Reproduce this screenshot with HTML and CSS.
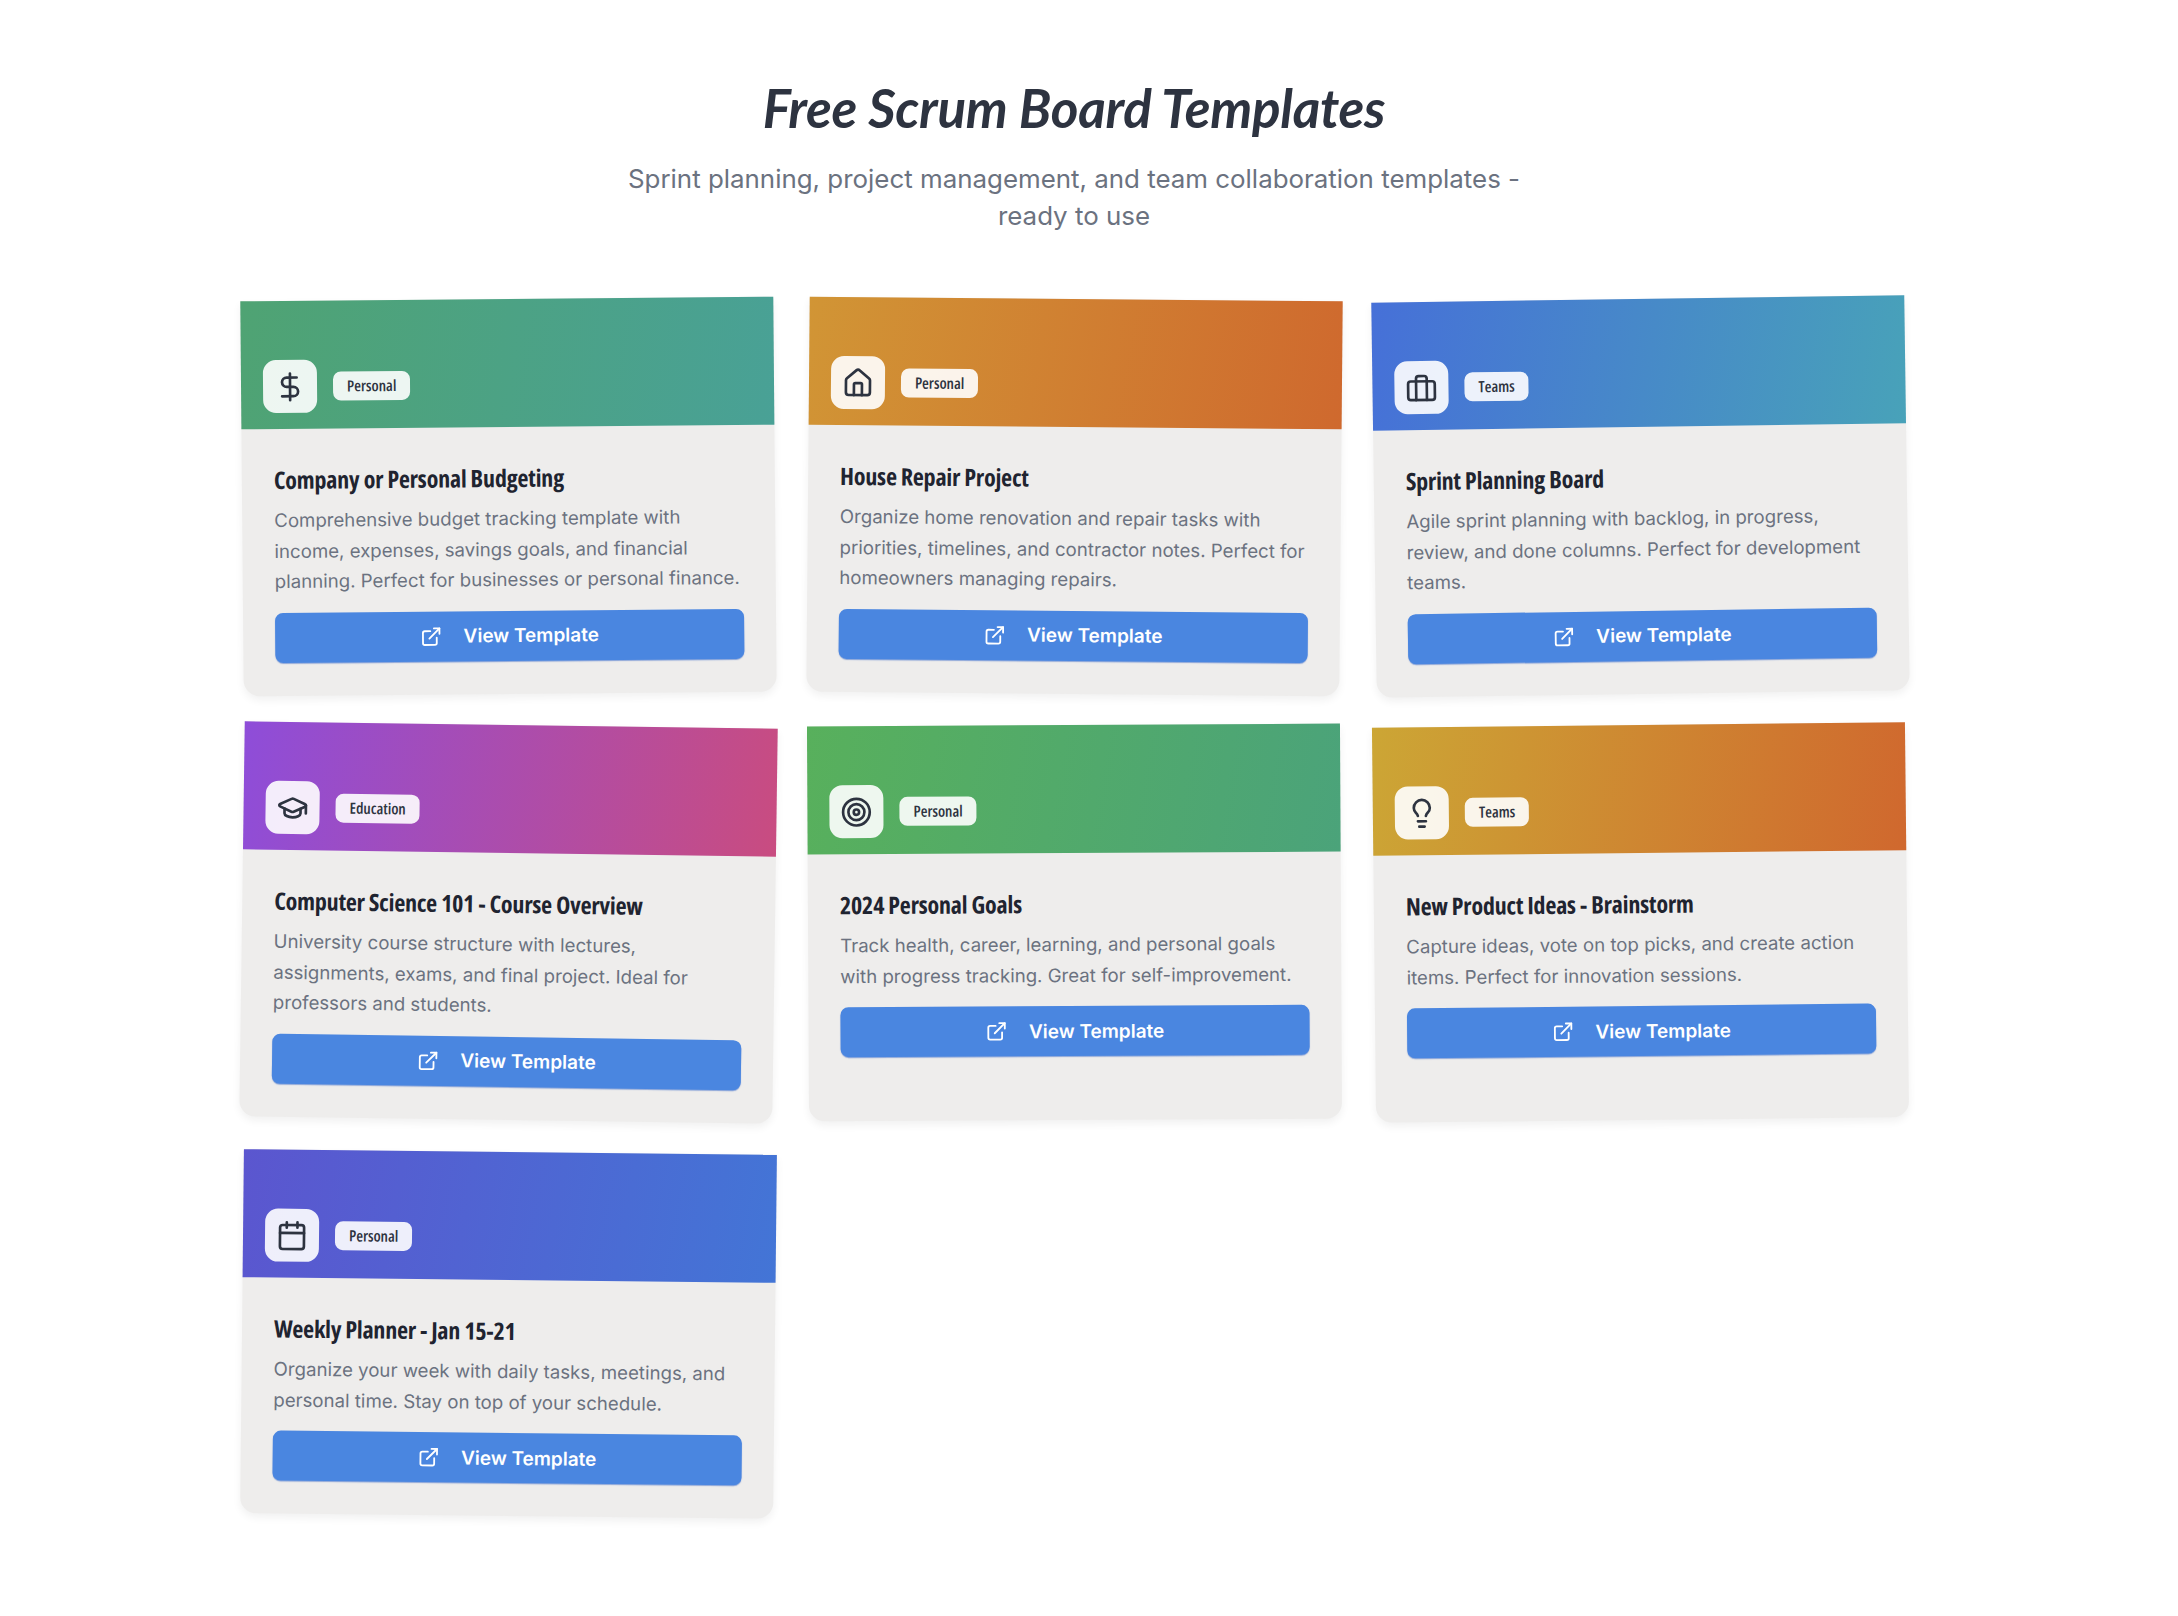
FILE: index.html
```html
<!DOCTYPE html>
<html>
	<head>
		<meta charset="utf-8">
		<title>Free Scrum Board Templates</title>
		<link rel="stylesheet" href="styles.css">
	</head>
	<body>
		<svg class="sprites" width="0" height="0">
			<symbol id="i-link" viewBox="0 0 24 24"><path d="M15 3h6v6"/><path d="M10 14 21 3"/><path d="M18 13v6a2 2 0 0 1-2 2H5a2 2 0 0 1-2-2V8a2 2 0 0 1 2-2h6"/></symbol>
		</svg>
		<header class="intro">
			<h1>Free Scrum Board Templates</h1>
			<p>Sprint planning, project management, and team collaboration templates - ready to use</p>
		</header>
		<main class="grid">
			<article class="card tilt-a">
				<div class="banner green-teal">
					<span class="icon"><svg viewBox="0 0 24 24"><path d="M12 2v20"/><path d="M17 5H9.5a3.5 3.5 0 0 0 0 7h5a3.5 3.5 0 0 1 0 7H6"/></svg></span>
					<span class="badge">Personal</span>
				</div>
				<div class="body">
					<h3>Company or Personal Budgeting</h3>
					<p>Comprehensive budget tracking template with income, expenses, savings goals, and financial planning. Perfect for businesses or personal finance.</p>
					<a class="button" href="#"><svg viewBox="0 0 24 24"><use href="#i-link"/></svg>View Template</a>
				</div>
			</article>
			<article class="card tilt-b">
				<div class="banner amber-orange">
					<span class="icon"><svg viewBox="0 0 24 24"><path d="M15 21v-8a1 1 0 0 0-1-1h-4a1 1 0 0 0-1 1v8"/><path d="M3 10a2 2 0 0 1 .709-1.528l7-5.999a2 2 0 0 1 2.582 0l7 5.999A2 2 0 0 1 21 10v9a2 2 0 0 1-2 2H5a2 2 0 0 1-2-2z"/></svg></span>
					<span class="badge">Personal</span>
				</div>
				<div class="body">
					<h3>House Repair Project</h3>
					<p>Organize home renovation and repair tasks with priorities, timelines, and contractor notes. Perfect for homeowners managing repairs.</p>
					<a class="button" href="#"><svg viewBox="0 0 24 24"><use href="#i-link"/></svg>View Template</a>
				</div>
			</article>
			<article class="card tilt-c">
				<div class="banner blue-cyan">
					<span class="icon"><svg viewBox="0 0 24 24"><path d="M16 21V5a2 2 0 0 0-2-2h-4a2 2 0 0 0-2 2v16"/><rect x="2" y="7" width="20" height="14" rx="2"/></svg></span>
					<span class="badge">Teams</span>
				</div>
				<div class="body">
					<h3>Sprint Planning Board</h3>
					<p>Agile sprint planning with backlog, in progress, review, and done columns. Perfect for development teams.</p>
					<a class="button" href="#"><svg viewBox="0 0 24 24"><use href="#i-link"/></svg>View Template</a>
				</div>
			</article>
			<article class="card tilt-d">
				<div class="banner purple-pink">
					<span class="icon"><svg viewBox="0 0 24 24"><path d="M21.42 10.922a1 1 0 0 0-.019-1.838L12.83 5.18a2 2 0 0 0-1.66 0L2.6 9.08a1 1 0 0 0 0 1.832l8.57 3.908a2 2 0 0 0 1.66 0z"/><path d="M22 10v6"/><path d="M6 12.5V16a6 3 0 0 0 12 0v-3.5"/></svg></span>
					<span class="badge">Education</span>
				</div>
				<div class="body">
					<h3>Computer Science 101 - Course Overview</h3>
					<p>University course structure with lectures, assignments, exams, and final project. Ideal for professors and students.</p>
					<a class="button" href="#"><svg viewBox="0 0 24 24"><use href="#i-link"/></svg>View Template</a>
				</div>
			</article>
			<article class="card tilt-e">
				<div class="banner green-sea">
					<span class="icon"><svg viewBox="0 0 24 24"><circle cx="12" cy="12" r="10"/><circle cx="12" cy="12" r="6"/><circle cx="12" cy="12" r="2"/></svg></span>
					<span class="badge">Personal</span>
				</div>
				<div class="body">
					<h3>2024 Personal Goals</h3>
					<p>Track health, career, learning, and personal goals with progress tracking. Great for self-improvement.</p>
					<a class="button" href="#"><svg viewBox="0 0 24 24"><use href="#i-link"/></svg>View Template</a>
				</div>
			</article>
			<article class="card tilt-f">
				<div class="banner gold-orange">
					<span class="icon"><svg viewBox="0 0 24 24"><path d="M15 14c.2-1 .7-1.7 1.5-2.5 1-.9 1.5-2.2 1.5-3.5A6 6 0 0 0 6 8c0 1 .2 2.2 1.5 3.5.7.7 1.3 1.5 1.5 2.5"/><path d="M9 18h6"/><path d="M10 22h4"/></svg></span>
					<span class="badge">Teams</span>
				</div>
				<div class="body">
					<h3>New Product Ideas - Brainstorm</h3>
					<p>Capture ideas, vote on top picks, and create action items. Perfect for innovation sessions.</p>
					<a class="button" href="#"><svg viewBox="0 0 24 24"><use href="#i-link"/></svg>View Template</a>
				</div>
			</article>
			<article class="card tilt-g">
				<div class="banner indigo-blue">
					<span class="icon"><svg viewBox="0 0 24 24"><path d="M8 2v4"/><path d="M16 2v4"/><rect x="3" y="4" width="18" height="18" rx="2"/><path d="M3 10h18"/></svg></span>
					<span class="badge">Personal</span>
				</div>
				<div class="body">
					<h3>Weekly Planner - Jan 15-21</h3>
					<p>Organize your week with daily tasks, meetings, and personal time. Stay on top of your schedule.</p>
					<a class="button" href="#"><svg viewBox="0 0 24 24"><use href="#i-link"/></svg>View Template</a>
				</div>
			</article>
		</main>
	</body>
</html>
```
FILE: styles.css
```css
* {
	box-sizing: border-box;
}

body {
	margin: 0;
	padding: 72px 30px 100px 0;
	background: #fff;
	font-family: 'Inter', sans-serif;
	color: #2d3340;
}

.sprites {
	position: absolute;
}

svg {
	fill: none;
	stroke: currentColor;
	stroke-width: 2;
	stroke-linecap: round;
	stroke-linejoin: round;
}

.intro {
	width: 900px;
	margin: 0 auto 64px;
	text-align: center;
}

.intro h1 {
	margin: 0 0 17px;
	font-family: 'Lato', sans-serif;
	font-style: italic;
	font-weight: 700;
	font-size: 53px;
	line-height: 72px;
	letter-spacing: -0.3px;
	color: #2d3340;
}

.intro p {
	margin: 0;
	font-size: 25.9px;
	line-height: 36.8px;
	color: #6b7280;
}

.grid {
	display: grid;
	grid-template-columns: repeat(3, 533px);
	gap: 32px 33px;
	justify-content: center;
}

.card {
	background: #eeedec;
	border-radius: 0 0 16px 16px;
	box-shadow: 0 4px 8px rgba(0, 0, 0, 0.06);
}

.tilt-a { transform: rotate(-0.5deg); }
.tilt-b { transform: rotate(0.5deg); }
.tilt-c { transform: rotate(-0.8deg); }
.tilt-d { transform: rotate(0.8deg); }
.tilt-e { transform: rotate(-0.3deg); }
.tilt-f { transform: rotate(-0.6deg); }
.tilt-g { transform: rotate(0.6deg); }

.banner {
	display: flex;
	align-items: flex-end;
	gap: 16px;
	height: 128px;
	padding: 0 22px 16px;
}

.green-teal { background: linear-gradient(100deg, #4fa373, #49a196); }
.amber-orange { background: linear-gradient(100deg, #d19535, #cf692e); }
.blue-cyan { background: linear-gradient(100deg, #4670d8, #48a2b9); }
.purple-pink { background: linear-gradient(100deg, #8e4dd9, #c94c80); }
.green-sea { background: linear-gradient(100deg, #58b05c, #4ba37a); }
.gold-orange { background: linear-gradient(100deg, #cca635, #d0682e); }
.indigo-blue { background: linear-gradient(100deg, #5b56cf, #4375d6); }

.icon {
	display: flex;
	align-items: center;
	justify-content: center;
	width: 54px;
	height: 53px;
	background: rgba(255, 255, 255, 0.9);
	border-radius: 13px;
}

.icon svg {
	width: 32px;
	height: 32px;
}

.badge {
	margin-bottom: 12px;
	padding: 0 14px;
	height: 29px;
	background: rgba(255, 255, 255, 0.9);
	border-radius: 8px;
	font-family: 'Open Sans', sans-serif;
	font-stretch: 75%;
	font-weight: 600;
	font-size: 15.5px;
	line-height: 29px;
}

.body {
	padding: 34px 32px 33px;
}

.body h3 {
	margin: 0 0 8px;
	font-family: 'Open Sans', sans-serif;
	font-stretch: 75%;
	font-weight: 700;
	font-size: 24px;
	line-height: 34px;
	letter-spacing: -0.2px;
	color: #1f2430;
}

.body p {
	margin: 0 0 16px;
	font-size: 18.65px;
	line-height: 30.5px;
	color: #6b7280;
}

.button {
	display: flex;
	align-items: center;
	justify-content: center;
	gap: 21px;
	height: 50px;
	background: #4a86e0;
	border-radius: 8px;
	box-shadow: 0 1px 1px rgba(50, 100, 200, 0.5);
	color: #fff;
	font-weight: 600;
	font-size: 19px;
	text-decoration: none;
}

.button svg {
	width: 22px;
	height: 22px;
}
```
